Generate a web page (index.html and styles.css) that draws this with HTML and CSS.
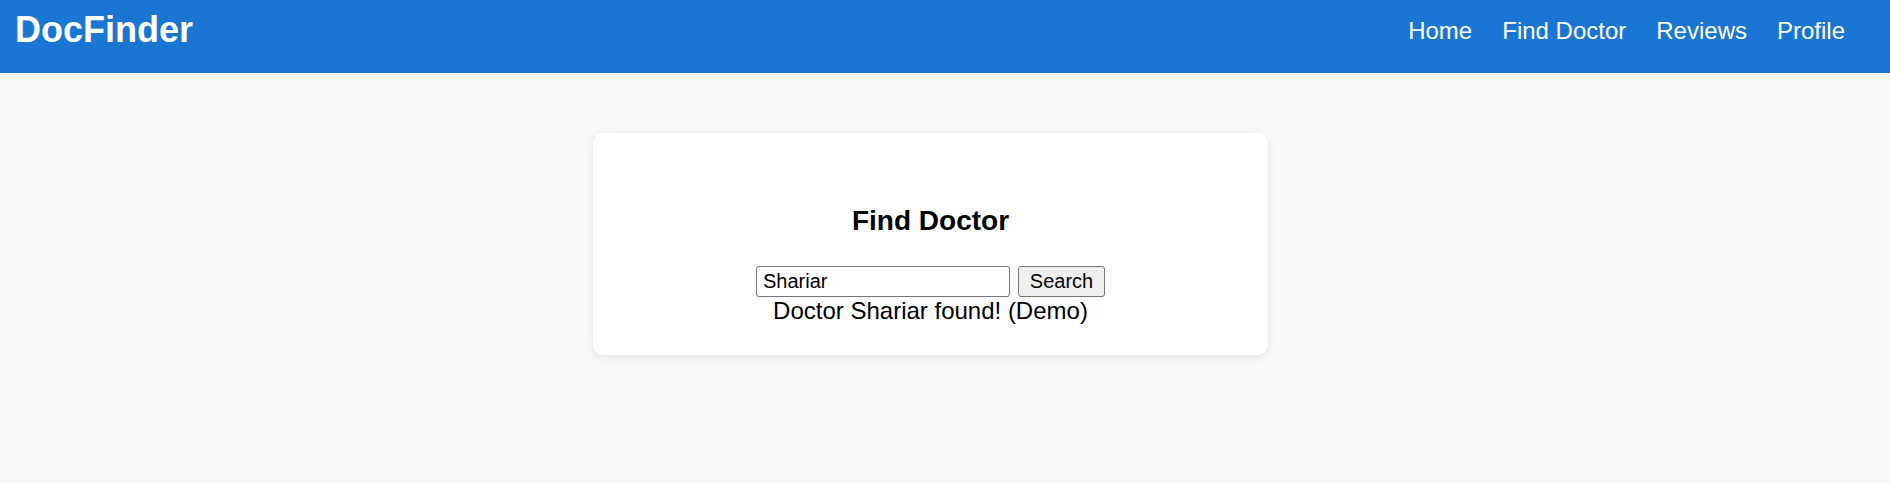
FILE: index.html
```html
<!DOCTYPE html>
<html lang="en">
<head>
<meta charset="utf-8">
<title>DocFinder</title>
<link rel="stylesheet" href="styles.css">
</head>
<body>
<header class="topbar">
  <div class="logo">DocFinder</div>
  <nav class="nav">
    <a href="#" class="nav-link">Home</a>
    <a href="#" class="nav-link">Find Doctor</a>
    <a href="#" class="nav-link">Reviews</a>
    <a href="#" class="nav-link">Profile</a>
  </nav>
</header>
<main class="main">
  <section class="card">
    <h3 class="card-title">Find Doctor</h3>
    <div class="search-row">
      <input class="search-input" type="text" value="Shariar">
      <button class="search-btn" type="button">Search</button>
    </div>
    <div class="result">Doctor Shariar found! (Demo)</div>
  </section>
</main>
</body>
</html>
```

FILE: styles.css
```css
html, body {
  margin: 0;
  padding: 0;
}
body {
  background: #f7f7f7;
  font-family: "Liberation Sans", Arial, sans-serif;
  font-size: 24px;
  color: #000;
  height: 483px;
  overflow: hidden;
}
.topbar {
  background: #1976d2;
  height: 73px;
  display: flex;
  justify-content: space-between;
  align-items: flex-start;
  padding: 0 45px 0 15px;
  box-sizing: border-box;
}
.logo {
  color: #fff;
  font-weight: bold;
  font-size: 36px;
  line-height: 40px;
  margin-top: 10px;
}
.nav {
  display: flex;
  gap: 30px;
  margin-top: 17px;
}
.nav-link {
  color: #fff;
  text-decoration: none;
  font-size: 24px;
  line-height: 27px;
}
.main {
  padding-top: 60px;
  padding-left: 593px;
}
.card {
  width: 675px;
  box-sizing: border-box;
  background: #fff;
  border-radius: 10px;
  box-shadow: 0 2px 10px rgba(0, 0, 0, 0.08);
  padding: 30px;
  text-align: center;
}
.card-title {
  font-size: 28px;
  font-weight: bold;
  line-height: 31px;
  margin: 42px 0 30px;
}
.search-row {
  display: flex;
  justify-content: center;
  gap: 8px;
  height: 31px;
}
.search-input {
  width: 254px;
  height: 31px;
  box-sizing: border-box;
  border: 1px solid #767676;
  border-radius: 3px;
  padding: 0 6px;
  font-family: "Liberation Sans", Arial, sans-serif;
  font-size: 20px;
  color: #000;
  background: #fff;
  margin: 0;
}
.search-btn {
  width: 87px;
  height: 31px;
  box-sizing: border-box;
  border: 1px solid #767676;
  border-radius: 3px;
  background: #efefef;
  font-family: "Liberation Sans", Arial, sans-serif;
  font-size: 20px;
  color: #000;
  padding: 0;
  margin: 0;
}
.result {
  font-size: 24px;
  line-height: 28px;
}
```
